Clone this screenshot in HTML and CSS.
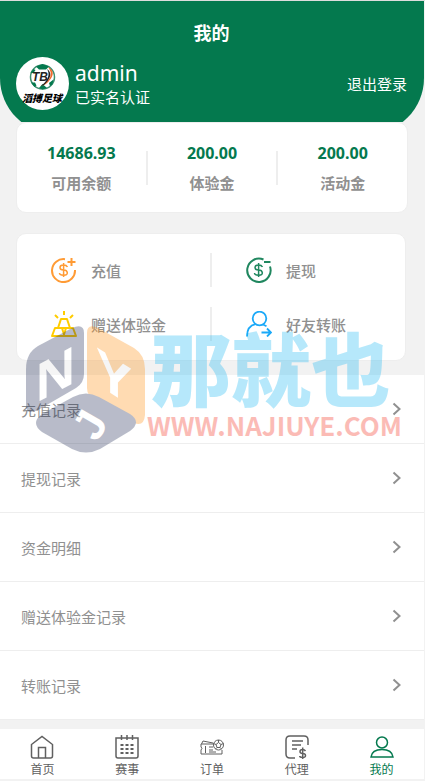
FILE: index.html
```html
<!DOCTYPE html>
<html lang="zh-CN">
<head>
    <meta charset="UTF-8">
    <meta name="viewport" content="width=device-width, initial-scale=1.0">
    <title>我的</title>
    <link rel="stylesheet" href="styles.css">
</head>
<body>

<header class="header">
    <h1>我的</h1>
    <div class="user">
        <svg class="avatar" viewBox="0 0 53 53" aria-hidden="true">
            <circle cx="26.500" cy="26.500" r="26.500" fill="#fff"/>
            <circle cx="26.500" cy="20" r="12" fill="#fff" stroke="#3d8f70" stroke-width="1.500"/>
            <path d="M20 9.500l6.500-2.500 6.500 2.500-3 3h-7zM14.500 16l3-4 2 1-2 3zM15 25.500l4 0 1.500 3-2 1.500zM23 31l3.500-4 4.500 4-4.500 1.500zM34 29l-1-3 4.500-3.500-1 5z" fill="#04794e"/>
            <path d="M32 10q9 5 1 14-3 4-8 5 15-9 7-19z" fill="#f26a2c"/>
            <path d="M31 12q7 5-1 14-2 3-5 3 11-9 6-17z" fill="#222"/>
            <text x="16" y="24" class="avatar-mark">TB</text>
            <text x="26" y="45" class="avatar-name">滔搏足球</text>
        </svg>
        <div class="user-info">
            <div class="user-name">admin</div>
            <div class="user-state">已实名认证</div>
        </div>
        <a href="#" class="logout">退出登录</a>
    </div>
</header>

<main>
    <section class="card balance">
        <div class="balance-item">
            <strong>14686.93</strong>
            <span>可用余额</span>
        </div>
        <i class="divider"></i>
        <div class="balance-item">
            <strong>200.00</strong>
            <span>体验金</span>
        </div>
        <i class="divider"></i>
        <div class="balance-item">
            <strong>200.00</strong>
            <span>活动金</span>
        </div>
    </section>

    <section class="card actions">
        <div class="action-row">
            <a href="#" class="action">
                <svg viewBox="0 0 26 26" fill="none" stroke="#ff9b35" stroke-width="2">
                    <path d="M14 2.200A11.500 11.500 0 1 0 24 13"/>
                    <path d="M20.500 1v8M16.500 5h8"/>
                    <path d="M16.500 10q-1-2-4-2-3.500 0-3.500 2.500t3.500 2.500 3.800 2.700-3.800 2.500-4-2.200M12.600 6v14" stroke-width="1.500"/>
                </svg>
                充值
            </a>
            <i class="divider"></i>
            <a href="#" class="action">
                <svg viewBox="0 0 26 26" fill="none" stroke="#20875f" stroke-width="2">
                    <path d="M17.500 2.500A11.700 11.700 0 1 0 24 9.500"/>
                    <path d="M18 5h6.500"/>
                    <path d="M16.500 10q-1-2-4-2-3.500 0-3.500 2.500t3.500 2.500 3.800 2.700-3.800 2.500-4-2.200M12.600 6v14" stroke-width="1.500"/>
                </svg>
                提现
            </a>
        </div>
        <div class="action-row">
            <a href="#" class="action">
                <svg viewBox="0 0 26 26" fill="none" stroke="#fc0" stroke-width="2" stroke-linejoin="round">
                    <path d="M13 0v4M4 4l3 3M22 4l-3 3"/>
                    <path d="M10 8h6l3 9H7zM4 17h7l2.500 8H1zM15 17h7l3 8H12.500z"/>
                </svg>
                赠送体验金
            </a>
            <i class="divider"></i>
            <a href="#" class="action">
                <svg viewBox="0 0 26 26" fill="none" stroke="#1ba9f8" stroke-width="1.800">
                    <circle cx="13.500" cy="7.500" r="6.800"/>
                    <path d="M1 25.500Q1 15 9.500 13.200M17 13.500l3.500 1.800M15.500 21.500H25M21 17.500l4 4-4 4"/>
                </svg>
                好友转账
            </a>
        </div>
    </section>

    <nav class="records">
        <a href="#">充值记录<svg viewBox="0 0 10 14"><path d="M1.500 1.500L7.500 7l-6 5.500"/></svg></a>
        <a href="#">提现记录<svg viewBox="0 0 10 14"><path d="M1.500 1.500L7.500 7l-6 5.500"/></svg></a>
        <a href="#">资金明细<svg viewBox="0 0 10 14"><path d="M1.500 1.500L7.500 7l-6 5.500"/></svg></a>
        <a href="#">赠送体验金记录<svg viewBox="0 0 10 14"><path d="M1.500 1.500L7.500 7l-6 5.500"/></svg></a>
        <a href="#">转账记录<svg viewBox="0 0 10 14"><path d="M1.500 1.500L7.500 7l-6 5.500"/></svg></a>
    </nav>
</main>

<nav class="tabbar">
    <a href="#">
        <svg viewBox="0 0 24 24">
            <path d="M1.500 9.500L12 1.500l10.500 8V21q0 2-2 2h-17q-2 0-2-2zM8.500 23V12.500h7V23"/>
        </svg>
        首页
    </a>
    <a href="#">
        <svg viewBox="0 0 24 24">
            <path d="M1 3h22v18q0 2-2 2H3q-2 0-2-2zM6.500 0v5M12 0v5M17.500 0v5"/>
            <path d="M5.500 10h13M5.500 14h13M5.500 18h13" stroke-width="2" stroke-dasharray="3 2"/>
        </svg>
        赛事
    </a>
    <a href="#">
        <svg class="thin" viewBox="0 0 24 24">
            <path d="M14 9H1v3q2 1 0 3v4h21v-4M1.500 9L3 6l10 2M5.500 11v7M9 12h4M9 15h4M9 17h7"/>
            <circle cx="18.500" cy="10" r="5"/>
            <path d="M18.500 7.500l2.500 2-1 3h-3l-1-3zM18.500 5v2.500M21 9.500l2.500-1M20 12.500l1.500 1.500M17 12.500L15.500 14M16 9.500l-2.500-1"/>
        </svg>
        订单
    </a>
    <a href="#">
        <svg viewBox="0 0 24 24">
            <path d="M10 23H5q-4 0-4-4V5q0-4 4-4h14q4 0 4 4v5M7 6h11M7 10h9M7 14h5"/>
            <path d="M20.500 16q-1-1.500-3-1.500-2.500 0-2.500 2t2.700 2 2.800 2-2.800 2-3-1.500M17.700 12.500V24"/>
        </svg>
        代理
    </a>
    <a href="#" class="active">
        <svg viewBox="0 0 24 24">
            <circle cx="12" cy="7.500" r="5.500"/>
            <path d="M1 22Q2 14.500 12 14.500T23 22z"/>
        </svg>
        我的
    </a>
</nav>

<div class="watermark">
    <svg viewBox="0 0 120 128">
        <path fill="#16234e" d="M0 44Q0 28 12 21L46 3Q58-2 58 8v41q0 9-8 14L12 85Q0 91 0 80z"/>
        <path fill="#ff8a05" d="M61 8Q61-2 72 3l36 20q11 7 11 21v46q-1 12-11 8L69 75q-8-4-8-12z"/>
        <path fill="#16234e" d="M47 72q13-7 26 0l31 17q12 8 0 17l-30 18q-14 7-28 0L16 107q-12-9 0-18z"/>
        <text transform="translate(10 78) skewY(-28)">N</text>
        <text transform="translate(70 59) skewY(32)">Y</text>
        <text transform="translate(71 118) rotate(-60)" class="small">J</text>
    </svg>
    <div class="watermark-text">
        <div class="watermark-name">那就也</div>
        <div class="watermark-url">WWW.NAJIUYE.COM</div>
    </div>
</div>

</body>
</html>
```

FILE: styles.css
```css
* {
    box-sizing: border-box;
}

body {
    position: relative;
    margin: 0;
    padding-right: 1px;
    border-top: 1px solid #ddd;
    background-color: #f2f2f2;
    color: #909090;
    font-family: "Noto Sans", "Noto Sans CJK SC", sans-serif;
    font-size: 15px;
}

a {
    color: inherit;
    text-decoration: none;
}

.header {
    position: relative;
    overflow: hidden;
    padding: 16px 17px 12px 16px;
    color: #fff;
}

/* curved background, its lower edge is cut off by the header */
.header::before {
    content: "";
    position: absolute;
    z-index: -1;
    top: 0;
    right: 0;
    bottom: -12px;
    left: 0;
    border-radius: 0 0 56px 56px;
    background-color: #04794e;
}

h1 {
    margin: 0 0 8px;
    font-size: 18px;
    line-height: 32px;
    text-align: center;
}

.user {
    display: flex;
    align-items: center;
}

.avatar {
    width: 53px;
    height: 53px;
}

.avatar-mark {
    font: italic bold 12px "Liberation Sans", sans-serif;
    fill: #222;
}

.avatar-name {
    font: italic 900 10px "Noto Sans CJK SC", sans-serif;
    text-anchor: middle;
}

.user-info {
    flex: 1;
    margin-left: 6px;
    padding-bottom: 2px;
}

.user-name {
    font-size: 21px;
    line-height: 28px;
}

.user-state {
    line-height: 20px;
}

.card {
    margin: 0 16px 20px;
    border: 1px solid #eee;
    border-radius: 10px;
    background-color: #fff;
}

.divider {
    width: 2px;
    height: 34px;
    background-color: #eee;
}

.balance {
    display: flex;
    align-items: center;
    padding: 18px 0 17px;
}

.balance-item {
    flex: 1;
    display: flex;
    flex-direction: column;
    gap: 6px;
    line-height: 24px;
    text-align: center;
}

.balance-item strong {
    color: #04794e;
    font-size: 16px;
}

.balance-item span {
    font-weight: bold;
}

.actions {
    display: grid;
    gap: 20px;
    margin: 20px 18px 14px 16px;
    padding: 19px 0;
}

.action-row {
    display: flex;
    align-items: center;
}

.action {
    flex: 1;
    display: flex;
    align-items: center;
    gap: 14px;
    padding-left: 34px;
    font-weight: 500;
}

.action svg {
    width: 26px;
    height: 26px;
}

.records {
    background-color: #fff;
}

.records a {
    display: flex;
    align-items: center;
    justify-content: space-between;
    height: 69px;
    padding: 0 22px 0 21px;
    border-bottom: 1px solid #eee;
}

.records svg {
    width: 10px;
    height: 14px;
    fill: none;
    stroke: #909090;
    stroke-width: 2;
}

.tabbar {
    display: flex;
    margin: 9px 0 2px;
    padding-top: 6px;
    background-color: #fff;
    color: #606060;
    font-size: 12px;
    line-height: 18px;
}

.tabbar a {
    flex: 1;
    display: flex;
    flex-direction: column;
    align-items: center;
    gap: 2px;
}

.tabbar svg {
    width: 24px;
    height: 24px;
    fill: none;
    stroke: currentColor;
    stroke-width: 1.5;
}

.tabbar .thin {
    stroke-width: 1;
}

.tabbar .active {
    color: #04794e;
}

.watermark {
    position: absolute;
    top: 324px;
    left: 26px;
    display: flex;
    opacity: 0.3;
    pointer-events: none;
}

.watermark svg {
    width: 120px;
    height: 128px;
}

.watermark text {
    font: bold 54px "Liberation Sans", sans-serif;
    fill: #fff;
}

.watermark .small {
    font-size: 44px;
}

.watermark-text {
    font-family: "Noto Sans CJK SC", sans-serif;
    white-space: nowrap;
}

.watermark-name {
    padding-left: 5px;
    color: #12b6f2;
    font-size: 80px;
    font-weight: 900;
    line-height: 80px;
}

.watermark-url {
    padding-left: 1px;
    color: #f2230f;
    font-size: 26px;
    font-weight: bold;
    line-height: 40px;
}
```
